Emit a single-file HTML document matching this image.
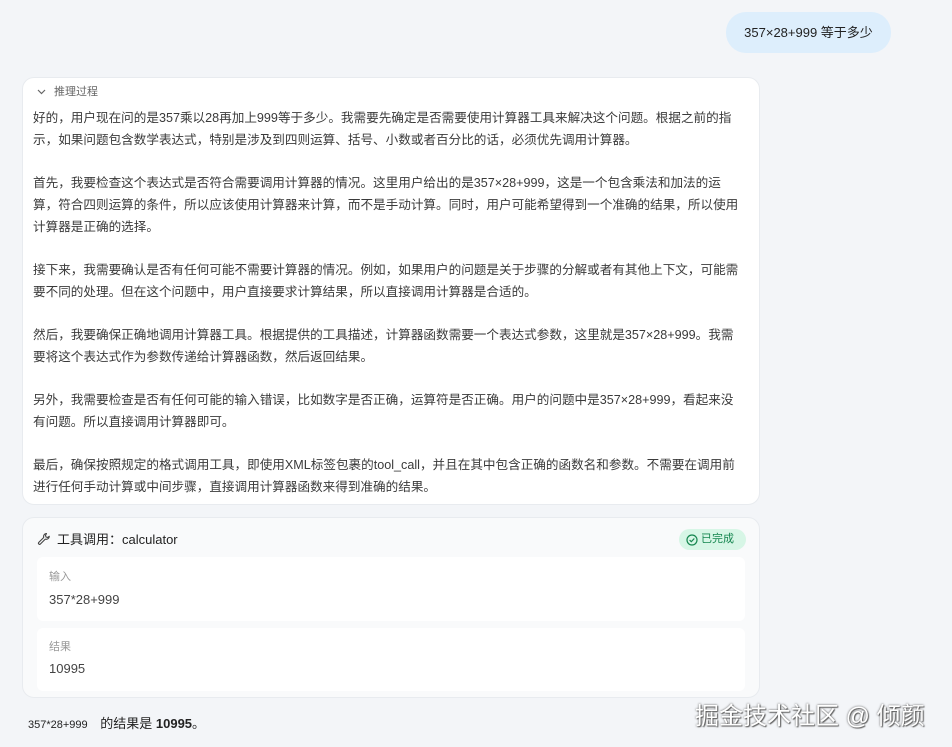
<!DOCTYPE html>
<html><head><meta charset="utf-8"><style>
*{margin:0;padding:0;box-sizing:border-box}
body{width:952px;height:747px;overflow:hidden;background:#f3f5f8;font-family:"Liberation Sans","Noto Sans CJK SC",sans-serif;color:#333;position:relative}
.bubble{position:absolute;left:726px;top:12px;width:165px;height:41px;border-radius:20px;background:#ddeefc;font-size:13px;color:#222;line-height:41px;text-align:center}
.card{position:absolute;left:22px;top:77px;width:738px;height:428px;background:#fff;border:1px solid #e8ebef;border-radius:12px}
.hd{position:absolute;left:14px;top:5px;font-size:11px;color:#666}
.hd svg{vertical-align:middle;margin-right:8px}
.txt{position:absolute;left:10px;top:30px;font-size:12.6px;color:#3a3a3a;line-height:21.7px;white-space:nowrap}
.tool{position:absolute;left:22px;top:517px;width:738px;height:181px;background:#f9fafb;border:1px solid #e8ebef;border-radius:12px}
.th{position:absolute;left:14px;top:11px;font-size:13px;color:#222}
.badge{position:absolute;left:656px;top:11px;width:67px;height:21px;border-radius:11px;background:#d7f6e6;color:#15864f;font-size:11px;line-height:21px;padding-left:22px}
.box{position:absolute;left:14px;width:708px;background:#fff;border-radius:6px}
.lbl{position:absolute;left:12px;font-size:11px;color:#999}
.val{position:absolute;left:12px;font-size:13px;color:#444}
.final{position:absolute;left:28px;top:713px;font-size:13px;color:#222}
.wm{position:absolute;left:695px;top:696px;font-size:24px;color:#fff;text-shadow:0 0 2px #555,1px 1px 1px #666;white-space:nowrap}
</style></head><body>
<div class="bubble">357×28+999 等于多少</div>
<div class="card">
<div class="hd"><svg width="9" height="6" viewBox="0 0 9 6"><path d="M1 1l3.5 3.5L8 1" fill="none" stroke="#666" stroke-width="1.2"/></svg>推理过程</div>
<div class="txt">好的，用户现在问的是357乘以28再加上999等于多少。我需要先确定是否需要使用计算器工具来解决这个问题。根据之前的指<br>示，如果问题包含数学表达式，特别是涉及到四则运算、括号、小数或者百分比的话，必须优先调用计算器。<br><br>首先，我要检查这个表达式是否符合需要调用计算器的情况。这里用户给出的是357×28+999，这是一个包含乘法和加法的运<br>算，符合四则运算的条件，所以应该使用计算器来计算，而不是手动计算。同时，用户可能希望得到一个准确的结果，所以使用<br>计算器是正确的选择。<br><br>接下来，我需要确认是否有任何可能不需要计算器的情况。例如，如果用户的问题是关于步骤的分解或者有其他上下文，可能需<br>要不同的处理。但在这个问题中，用户直接要求计算结果，所以直接调用计算器是合适的。<br><br>然后，我要确保正确地调用计算器工具。根据提供的工具描述，计算器函数需要一个表达式参数，这里就是357×28+999。我需<br>要将这个表达式作为参数传递给计算器函数，然后返回结果。<br><br>另外，我需要检查是否有任何可能的输入错误，比如数字是否正确，运算符是否正确。用户的问题中是357×28+999，看起来没<br>有问题。所以直接调用计算器即可。<br><br>最后，确保按照规定的格式调用工具，即使用XML标签包裹的tool_call，并且在其中包含正确的函数名和参数。不需要在调用前<br>进行任何手动计算或中间步骤，直接调用计算器函数来得到准确的结果。</div>
</div>
<div class="tool">
<div class="th"><svg width="14" height="14" viewBox="0 0 14 14" style="vertical-align:-2px;margin-right:6px"><path d="M9.5 1.5a3 3 0 0 0-2.8 4L1.8 10.4a1.1 1.1 0 0 0 1.6 1.6l4.9-4.9a3 3 0 0 0 4-2.8l-1.7 1.2-1.6-.5-.5-1.6z" fill="none" stroke="#444" stroke-width="1.1" stroke-linejoin="round"/></svg>工具调用：calculator</div>
<div class="badge"><svg width="12" height="12" viewBox="0 0 12 12" style="position:absolute;left:7px;top:4.5px"><circle cx="6" cy="6" r="5" fill="none" stroke="#15864f" stroke-width="1.2"/><path d="M3.6 6.1l1.7 1.6 3-3.2" fill="none" stroke="#15864f" stroke-width="1.2"/></svg>已完成</div>
<div class="box" style="top:39px;height:64px"><div class="lbl" style="top:11px">输入</div><div class="val" style="top:35px">357*28+999</div></div>
<div class="box" style="top:110px;height:63px"><div class="lbl" style="top:10px">结果</div><div class="val" style="top:33px">10995</div></div>
</div>
<div class="final"><span style="font-size:11px">357*28+999</span><span style="display:inline-block;width:9px"></span> 的结果是 <b>10995</b>。</div>
<div class="wm">掘金技术社区 @ 倾颜</div>
</body></html>
